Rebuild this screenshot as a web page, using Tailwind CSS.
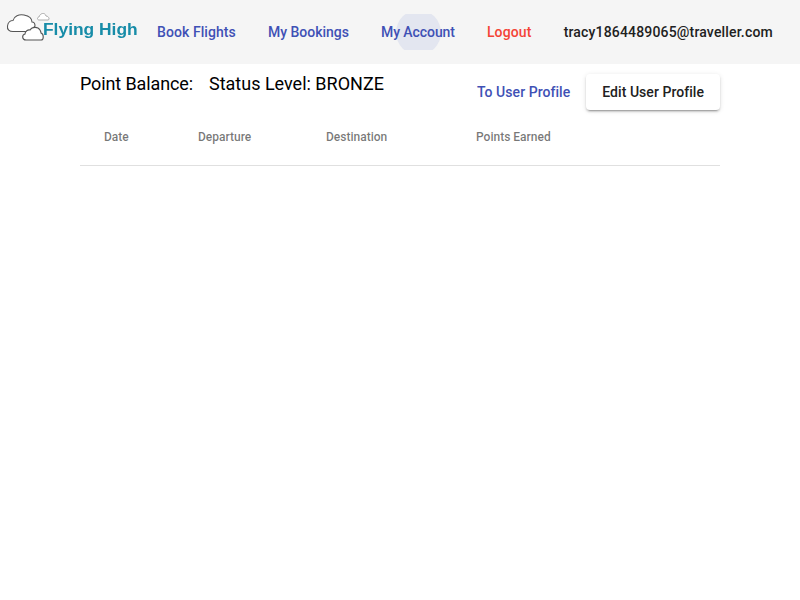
<!DOCTYPE html>
<html>
<head>
<meta charset="utf-8">
<script src="https://cdn.jsdelivr.net/npm/@tailwindcss/browser@4"></script>
</head>
<body class="bg-white font-['Roboto',sans-serif] text-black">
<header class="flex h-16 items-center bg-[#f5f5f5]">
  <div class="relative h-16 w-[141px] shrink-0">
    <svg class="absolute top-0 left-0 blur-[0.3px]" width="52" height="44" viewBox="0 0 52 44" fill="none">
      <path d="M14 31.500C9 32 7 29 7.500 26C8 22 11 20.500 13 20.500C14 16 19 14 24 15C29 16 32 19 32 22C34 22 35 24 35 26L30 31.500Z" fill="#fff" stroke="#555" stroke-width="1.100"/>
      <path d="M26 40C22 40 21.500 35 25 34C25 31 28 29.500 30 30C32 26.500 38 26.500 40 30C41 32 41 33 41 33C44 34 44 40 41 40Z" fill="#fff" stroke="#555" stroke-width="1.100"/>
      <path d="M39 20C37 20 37 17 39 17C40 13 45 12 46 16C49 16 50 20 48 20Z" fill="#fff" stroke="#999" stroke-width="0.800"/>
    </svg>
    <span class="absolute top-[17px] left-[43px] font-['Liberation_Sans',sans-serif] text-[17.400px] leading-6 font-bold whitespace-nowrap text-[#178ca8] blur-[0.3px]">Flying High</span>
  </div>
  <nav class="flex items-center text-sm leading-9 font-medium whitespace-nowrap">
    <a class="h-9 px-4 tracking-[0.08px] text-[#3f51b5]">Book Flights</a>
    <a class="h-9 px-4 text-[#3f51b5]">My Bookings</a>
    <a class="relative h-9 overflow-hidden px-4 tracking-[-0.08px] text-[#3f51b5]">
      <span class="absolute top-[-4.500px] left-[31px] h-[45px] w-[45px] rounded-full bg-[#e3e6f0]"></span>
      <span class="relative">My Account</span>
    </a>
    <a class="h-9 px-4 tracking-[0.15px] text-[#f44336]">Logout</a>
    <a class="h-9 px-4 tracking-[0.17px] text-[#212121]">tracy1864489065@traveller.com</a>
  </nav>
</header>
<main class="mx-20">
  <div class="flex h-[46px] items-start justify-between">
    <div class="flex gap-4 pt-[8px] text-lg leading-6">
      <span class="tracking-[-0.12px]">Point Balance:</span>
      <span>Status Level: BRONZE</span>
    </div>
    <div class="flex items-center pt-[10px] text-sm leading-9 font-medium whitespace-nowrap">
      <a class="h-9 px-4 tracking-[0.05px] text-[#3f51b5]">To User Profile</a>
      <a class="h-9 rounded bg-white px-4 tracking-[0.05px] text-[#212121] shadow-[0_3px_1px_-2px_rgba(0,0,0,0.2),0_2px_2px_0_rgba(0,0,0,0.14),0_1px_5px_0_rgba(0,0,0,0.12)]">Edit User Profile</a>
    </div>
  </div>
  <div class="grid h-[56px] grid-cols-[118px_128px_150px_1fr] items-center border-b border-[#e0e0e0] pb-[2px] text-xs font-medium text-black/54">
    <span class="pl-6">Date</span>
    <span>Departure</span>
    <span>Destination</span>
    <span>Points Earned</span>
  </div>
</main>
</body>
</html>
